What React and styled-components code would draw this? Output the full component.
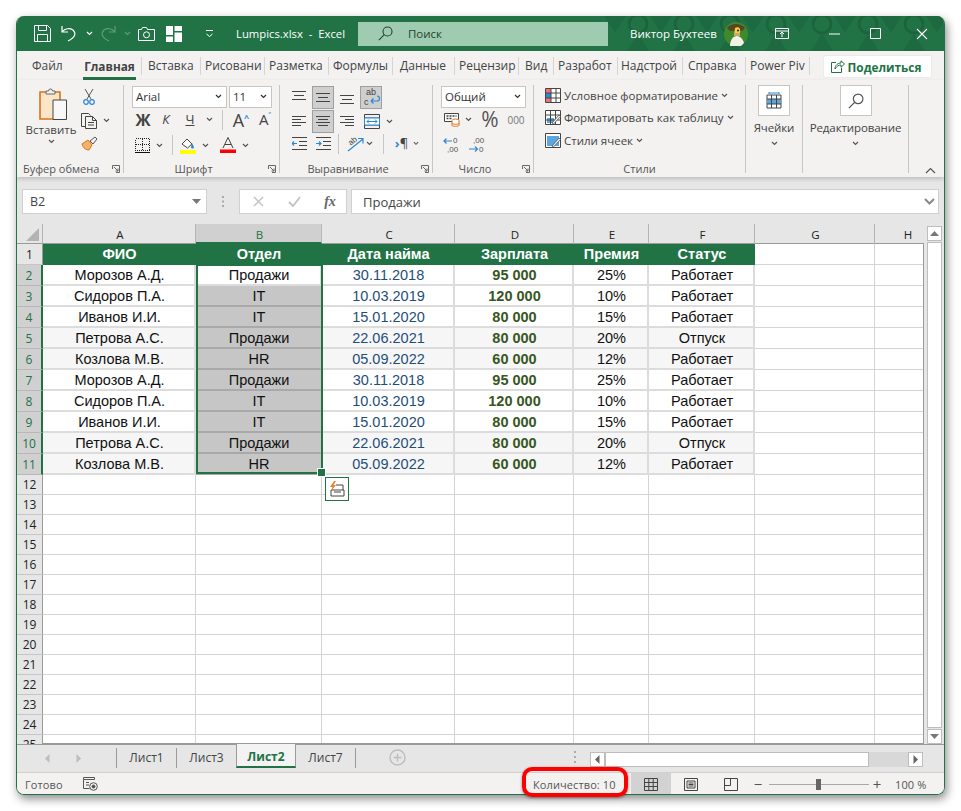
import React from 'react';
import styled, { createGlobalStyle } from 'styled-components';

const GREEN = '#217346';
const UI_FONT = '"Open Sans", "Noto Sans", sans-serif';

const GlobalStyle = createGlobalStyle`
  html, body { margin: 0; padding: 0; background: #fff; }
  * { box-sizing: border-box; }
  body { font-family: ${UI_FONT}; color: #333; }
`;

const Page = styled.div`
  width: 961px;
  height: 811px;
  padding: 16px;
`;

const WindowFrame = styled.div`
  position: relative;
  border-radius: 8px;
  box-shadow: 2px 4px 10px rgba(0, 0, 0, 0.45);
`;

const Excel = styled.div`
  width: 929px;
  height: 779px;
  display: flex;
  flex-direction: column;
  border: 1px solid ${GREEN};
  border-top: 0;
  border-radius: 8px;
  overflow: hidden;
  background: #e6e6e6;
`;

/* title bar */
const TitleBar = styled.div`
  position: relative;
  flex: 0 0 35px;
  display: flex;
  align-items: center;
  background: ${GREEN};
  color: #fff;
  font-size: 11.5px;
`;

const TitlePattern = styled.svg`
  position: absolute;
  right: 0;
  top: 0;
  pointer-events: none;
`;

const Slot = styled.div`
  flex: 0 0 ${(p) => p.$w}px;
  width: ${(p) => p.$w}px;
  display: flex;
  align-items: center;
  justify-content: center;
  position: relative;
`;

const FileName = styled.div`
  flex: 0 0 122px;
  white-space: nowrap;
  font-size: 11.3px;
`;

const SearchBox = styled.div`
  flex: 0 0 250px;
  height: 24px;
  display: flex;
  align-items: center;
  background: #9fcbb0;
  color: #22452f;
  font-size: 11.5px;
  padding-left: 20px;
  gap: 15px;
  position: relative;
`;

const UserName = styled.div`
  flex: 0 0 94px;
  margin-left: 22px;
  font-size: 11.5px;
  white-space: nowrap;
  position: relative;
`;

/* ribbon tabs */
const TabRow = styled.div`
  flex: 0 0 29px;
  display: flex;
  align-items: flex-start;
  background: #f3f2f1;
  position: relative;
`;

const RibbonTab = styled.div`
  flex: 0 0 ${(p) => p.$w}px;
  height: 18px;
  margin-top: 6px;
  padding-left: ${(p) => p.$pad ?? 4}px;
  font-size: 12px;
  line-height: 18px;
  color: #444;
  white-space: nowrap;
  overflow: hidden;
  border-right: ${(p) => (p.$plain ? '0' : '1px solid #d6d4d2')};
`;

const ActiveTab = styled.div`
  flex: 0 0 53px;
  margin-right: 5px;
  height: 23px;
  margin-top: 6px;
  font-size: 11.8px;
  line-height: 18px;
  font-weight: 700;
  color: #444;
  text-align: center;
  white-space: nowrap;
  border-bottom: 3px solid ${GREEN};
`;

const TabEdge = styled.div`
  flex: 0 0 1px;
  height: 18px;
  margin-top: 6px;
  background: #d6d4d2;
`;

const ShareButton = styled.div`
  margin-left: 13px;
  margin-top: 4px;
  width: 109px;
  height: 23px;
  display: flex;
  align-items: center;
  justify-content: center;
  gap: 3px;
  padding-right: 3px;
  background: #fff;
  border: 1px solid #eceaea;
  border-radius: 2px;
  color: ${GREEN};
  font-size: 11.8px;
  font-weight: 700;
`;

/* ribbon */
const Ribbon = styled.div`
  flex: 0 0 97px;
  display: flex;
  align-items: flex-start;
  padding-top: 5px;
  background: #f3f2f1;
  position: relative;
  box-shadow: 0 2px 4px rgba(0, 0, 0, 0.18);
  z-index: 2;
`;

const Group = styled.div`
  position: relative;
  flex: 0 0 ${(p) => p.$w}px;
  height: 88px;
  display: flex;
  flex-direction: column;
  border-right: 1px solid #c8c6c4;
`;

const GroupBody = styled.div`
  flex: 0 0 76px;
  display: flex;
  flex-direction: ${(p) => (p.$row ? 'row' : 'column')};
  padding-left: ${(p) => p.$pad ?? 0}px;
`;

const GroupLabel = styled.div`
  height: 12px;
  line-height: 16px;
  font-size: 11px;
  color: #555;
  white-space: nowrap;
  text-align: ${(p) => (p.$left ? 'left' : 'center')};
  padding-left: ${(p) => (p.$left ? 6 : 0)}px;
  padding-right: ${(p) => (p.$left ? 0 : p.$pr ?? 16)}px;
`;

const Launcher = styled.svg`
  position: absolute;
  right: 3px;
  bottom: 0;
`;

const ToolRow = styled.div`
  display: flex;
  align-items: center;
  height: ${(p) => p.$h ?? 24}px;
  padding-left: ${(p) => p.$pad ?? 0}px;
`;

const ActiveBox = styled.div`
  flex: 0 0 22px;
  height: 23px;
  margin-right: 2px;
  display: flex;
  align-items: center;
  justify-content: center;
  background: ${(p) => (p.$on ? '#cfcfcf' : 'transparent')};
  border: 1px solid ${(p) => (p.$on ? '#9f9f9f' : 'transparent')};
`;

const Divider = styled.div`
  width: 1px;
  height: 20px;
  background: #c8c6c4;
`;

const Select = styled.div`
  width: ${(p) => p.$w}px;
  height: 22px;
  margin-right: ${(p) => p.$mr ?? 0}px;
  display: flex;
  align-items: center;
  justify-content: space-between;
  padding: 0 4px 0 3px;
  background: #fff;
  border: 1px solid #c8c6c4;
  font-size: 11.5px;
  color: #333;
`;

const PasteColumn = styled.div`
  flex: 0 0 62px;
  display: flex;
  flex-direction: column;
  align-items: center;
  padding-top: 3px;
  padding-left: 6px;
  font-size: 11.5px;
  color: #444;
  white-space: nowrap;
`;

const PasteArt = styled.div`
  margin-left: 4px;
  height: 32px;
`;

const PasteLabel = styled.div`
  margin-top: 1px;
  line-height: 18px;
`;

const ClipColumn = styled.div`
  display: flex;
  flex-direction: column;
`;

const StyleList = styled.div`
  margin-top: -1px;
`;

const StyleRow = styled.div`
  display: flex;
  align-items: center;
  height: 22.5px;
  padding-left: 11px;
  gap: 3px;
  font-size: 11.5px;
  color: #444;
  white-space: nowrap;
`;

const BigTool = styled.div`
  flex: 1;
  display: flex;
  flex-direction: column;
  align-items: center;
  font-size: 11.5px;
  color: #444;
  white-space: nowrap;
`;

const BigButton = styled.div`
  width: 32px;
  height: 31px;
  display: flex;
  align-items: center;
  justify-content: center;
  background: #fff;
  border: 1px solid #c8c6c4;
  margin-bottom: 3px;
`;

const BigLabel = styled.div`
  line-height: 18px;
  margin-bottom: 4px;
  letter-spacing: -0.1px;
`;

const CollapseIcon = styled.svg`
  position: absolute;
  right: 8px;
  bottom: 3px;
`;

const Glyph = styled.span`
  font-size: ${(p) => p.$size}px;
  font-weight: ${(p) => (p.$bold ? 700 : 400)};
  font-style: ${(p) => (p.$italic ? 'italic' : 'normal')};
  text-decoration: ${(p) => (p.$under ? 'underline' : 'none')};
  color: ${(p) => p.$color || '#444'};
  line-height: 1;
`;

const Caret = styled.sup`
  font-size: 9px;
  font-weight: 700;
  color: #2b88d8;
  vertical-align: 6px;
  line-height: 0;
`;

const PilcrowArrow = styled.span`
  color: #2b88d8;
  font-weight: 700;
`;

const FxGlyph = styled.span`
  font-family: "Liberation Serif", serif;
  font-size: 14px;
  font-style: italic;
  font-weight: 700;
  color: #666;
`;

/* formula bar */
const FormulaBar = styled.div`
  flex: 0 0 47px;
  display: flex;
  align-items: flex-start;
  padding: 12px 5px 0 5px;
  background: #e6e6e6;
`;

const NameBox = styled.div`
  width: 185px;
  height: 25px;
  display: flex;
  align-items: center;
  justify-content: space-between;
  padding: 0 5px 0 7px;
  background: #fff;
  border: 1px solid #d0d0d0;
  font-size: 12.5px;
  color: #444;
`;

const GripDots = styled.div`
  width: 32px;
  height: 25px;
  display: flex;
  align-items: center;
  justify-content: center;
`;

const FormulaButtons = styled.div`
  width: 108px;
  height: 25px;
  margin-right: 4px;
  display: flex;
  align-items: center;
  background: #fff;
  border: 1px solid #d0d0d0;
`;

const FormulaCell = styled.div`
  flex: 1;
  height: 25px;
  display: flex;
  align-items: center;
  justify-content: space-between;
  padding: 0 3px 0 11px;
  background: #fff;
  border: 1px solid #d0d0d0;
  font-size: 13px;
  color: #444;
`;

/* sheet */
const SheetArea = styled.div`
  flex: 0 0 520px;
  display: flex;
  background: #e6e6e6;
`;

const Sheet = styled.div`
  position: relative;
  flex: 0 0 907px;
  height: 520px;
  overflow: hidden;
  font-family: "Liberation Sans", Arial, sans-serif;
`;

/* the last column runs on past the visible edge of the sheet */
const COLUMNS = '26px 153px 126px 133px 119px 75px 106px 120px 65px';

const SheetRow = styled.div`
  display: grid;
  grid-template-columns: ${COLUMNS};
  height: ${(p) => p.$h}px;
`;

const ColHead = styled.div`
  display: flex;
  align-items: center;
  justify-content: center;
  padding: 2px 0 0 2px;
  background: ${(p) => (p.$on ? '#d0d0d0' : '#e6e6e6')};
  border-right: 1px solid ${(p) => (p.$on ? '#b8b8b8' : '#b4b4b4')};
  border-bottom: ${(p) => (p.$on ? `2px solid ${GREEN}` : '1px solid #9a9a9a')};
  font-family: ${UI_FONT};
  font-size: 11.5px;
  color: ${(p) => (p.$on ? GREEN : '#222')};
`;

const Corner = styled.div`
  display: flex;
  align-items: flex-end;
  justify-content: flex-end;
  padding: 0 3px 2px 0;
  background: #e6e6e6;
  border-right: 1px solid #b4b4b4;
  border-bottom: 1px solid #9a9a9a;
`;

const RowHead = styled.div`
  display: flex;
  align-items: center;
  justify-content: center;
  background: ${(p) => (p.$on ? '#d0d0d0' : '#e6e6e6')};
  border-bottom: 1px solid ${(p) => (p.$on ? '#b8b8b8' : '#c6c6c6')};
  border-right: ${(p) => (p.$on ? `2px solid ${GREEN}` : '1px solid #9a9a9a')};
  font-family: ${UI_FONT};
  font-size: 12px;
  color: ${(p) => (p.$on ? GREEN : '#222')};
`;

const HeaderCell = styled.div`
  display: flex;
  align-items: center;
  justify-content: center;
  padding-bottom: 1px;
  background: ${GREEN};
  color: #fff;
  font-size: 14.5px;
  font-weight: 700;
`;

const DataCell = styled.div`
  display: flex;
  align-items: center;
  justify-content: center;
  padding: 1px 0 0 2px;
  background: ${(p) => (p.$shade ? '#f6f6f6' : '#fff')};
  border-right: 2px solid #dcdcdc;
  border-bottom: 2px solid #dcdcdc;
  font-size: 14.5px;
  color: ${(p) => p.$color || '#111'};
  font-weight: ${(p) => (p.$bold ? 700 : 400)};
`;

const SelectedCell = styled(DataCell)`
  background: #c6c6c6;
  border-right: 2px solid #c6c6c6;
  border-bottom: 2px solid #a9a9a9;
`;

const EmptyCell = styled.div`
  background: #fff;
  border-right: 1px solid #d4d4d4;
  border-bottom: 1px solid #d4d4d4;
`;

const GridEdge = styled.div`
  position: absolute;
  right: 0;
  top: 19px;
  bottom: 0;
  width: 1px;
  background: #9a9a9a;
`;

const GridBottomEdge = styled.div`
  position: absolute;
  left: 26px;
  right: 0;
  bottom: 0;
  height: 1px;
  background: #9a9a9a;
`;

const Selection = styled.div`
  position: absolute;
  left: 179px;
  top: 40px;
  width: 127px;
  height: 210px;
  border: 2px solid ${GREEN};
  pointer-events: none;
`;

const FillHandle = styled.div`
  position: absolute;
  right: -5px;
  bottom: -5px;
  width: 7px;
  height: 7px;
  background: ${GREEN};
  border: 1px solid #fff;
  box-sizing: content-box;
`;

const PasteOptions = styled.div`
  position: absolute;
  left: 308px;
  top: 253px;
  width: 24px;
  height: 24px;
  display: flex;
  align-items: center;
  justify-content: center;
  background: #fff;
  border: 1px solid ${GREEN};
`;

const VScroll = styled.div`
  flex: 0 0 20px;
  height: 520px;
  padding: 2px 2px 0 3px;
  display: flex;
  flex-direction: column;
  gap: 1px;
`;

const ScrollButton = styled.div`
  flex: 0 0 ${(p) => p.$size ?? 15}px;
  width: ${(p) => p.$w ?? 15}px;
  display: flex;
  align-items: center;
  justify-content: center;
  background: #fff;
  border: 1px solid #bdbdbd;
`;

const VThumb = styled.div`
  flex: 1;
  background: #fff;
  border: 1px solid #bdbdbd;
`;

/* sheet tabs */
const SheetTabs = styled.div`
  flex: 0 0 28px;
  display: flex;
  align-items: flex-start;
  background: #e6e6e6;
  border-top: 1px solid #9a9a9a;
  font-size: 12px;
  color: #444;
`;

const NavArrows = styled.div`
  flex: 0 0 100px;
  height: 20px;
  margin-top: 3px;
  display: flex;
  align-items: center;
  gap: 22px;
  padding-left: 26px;
  border-right: 1px solid #9a9a9a;
`;

const SheetTab = styled.div`
  flex: 0 0 60px;
  height: 20px;
  margin-top: 3px;
  line-height: 20px;
  text-align: center;
  border-right: 1px solid #9a9a9a;
`;

const ActiveSheetTab = styled.div`
  flex: 0 0 60px;
  height: 24px;
  margin-top: -1px;
  margin-left: -1px;
  line-height: 26px;
  text-align: center;
  font-weight: 700;
  color: ${GREEN};
  background: #f3f3f3;
  border-left: 1px solid #9a9a9a;
  border-right: 1px solid #9a9a9a;
  border-bottom: 2px solid ${GREEN};
`;

const AddSheet = styled.div`
  margin-left: 33px;
  margin-top: 4px;
  width: 18px;
  height: 18px;
`;

const SplitDots = styled.div`
  margin-left: 167px;
  margin-top: 5px;
  width: 16px;
`;

const HScroll = styled.div`
  width: 333px;
  height: 15px;
  margin-top: 7px;
  display: flex;
  align-items: stretch;
`;

const HThumb = styled.div`
  flex: 0 0 264px;
  background: #fff;
  border: 1px solid #bdbdbd;
`;

const HTrack = styled.div`
  flex: 1;
  background: #d8d8d8;
`;

/* status bar */
const StatusBar = styled.div`
  flex: 1;
  display: flex;
  align-items: center;
  background: #f3f2f1;
  border-top: 1px solid #d2d0ce;
  font-size: 11px;
  color: #555;
  letter-spacing: 0.1px;
`;

const StatusLeft = styled.div`
  flex: 0 0 66px;
  padding-left: 8px;
`;

const StatusCount = styled.div`
  margin-left: 435px;
  flex: 0 0 98px;
  white-space: nowrap;
`;

const ViewButton = styled.div`
  flex: 0 0 40px;
  height: 22px;
  display: flex;
  align-items: center;
  justify-content: center;
  background: ${(p) => (p.$on ? '#d2d2d2' : 'transparent')};
`;

const ZoomSlider = styled.div`
  position: relative;
  width: 100px;
  height: 1px;
  margin: 0 2px 0 4px;
  background: #a8a8a8;
`;

const ZoomThumb = styled.div`
  position: absolute;
  left: 47px;
  top: -5px;
  width: 5px;
  height: 11px;
  background: #666;
`;

const ZoomText = styled.div`
  margin-left: 12px;
  white-space: nowrap;
`;

const ZoomSign = styled.span`
  font-size: 15px;
  color: #555;
  line-height: 1;
  width: ${(p) => p.$w}px;
  text-align: center;
`;

const Highlight = styled.div`
  position: absolute;
  left: 506px;
  top: 751px;
  width: 106px;
  height: 30px;
  border: 4px solid #f00;
  border-radius: 10px;
  box-shadow: 0 1px 3px rgba(0, 0, 0, 0.45);
  pointer-events: none;
  z-index: 5;
`;

/* icons */
const Chevron = ({ color = '#555', size = 7 }) => (
  <svg width={size} height={size - 2} viewBox="0 0 7 5">
    <path d="M1 1l2.500 2.500L6 1" fill="none" stroke={color} strokeWidth="1.200" />
  </svg>
);

const Tri = ({ dir = 'down', color = '#777', size = 9 }) => {
  const d = {
    down: 'M0 2h9L4.500 7z',
    up: 'M0 7h9L4.500 2z',
    left: 'M6.500 0v9L2 4.500z',
    right: 'M2.500 0v9L7 4.500z',
  }[dir];
  return (
    <svg width={size} height={size} viewBox="0 0 9 9">
      <path d={d} fill={color} />
    </svg>
  );
};

const LauncherIcon = () => (
  <Launcher width="8" height="8" viewBox="0 0 8 8">
    <path d="M.5 4V.5H7.500V7.500H4M2 2l4 4M6 3.500V6H3.500" fill="none" stroke="#666" />
  </Launcher>
);

const Lines = ({ rows }) => (
  <svg width="15" height="15" viewBox="0 0 15 15">
    {rows.map(([x1, x2, y]) => (
      <path key={y} d={`M${x1} ${y}.5H${x2}`} stroke="#444" />
    ))}
  </svg>
);

const SaveIcon = () => (
  <svg width="17" height="17" viewBox="0 0 17 17" fill="none" stroke="#fff">
    <path d="M.5.500h13l3 3v13H.5zM4.500.500v5h8v-5M3.500 16.500v-7h10v7" />
  </svg>
);

const UndoIcon = ({ color = '#fff' }) => (
  <svg width="16" height="17" viewBox="0 0 16 17" fill="none" stroke={color} strokeWidth="1.200">
    <path d="M1 1v6h6M1 7c3-4 8-4 11-2 3 3 3 7-5 11" />
  </svg>
);

const RedoIcon = () => (
  <svg width="16" height="17" viewBox="0 0 16 17" fill="none" stroke="#5f9c79" strokeWidth="1.200">
    <path d="M15 1v6H9M15 7c-3-4-8-4-11-2-3 3-3 7 5 11" />
  </svg>
);

const CameraIcon = () => (
  <svg width="17" height="14" viewBox="0 0 17 14" fill="none" stroke="#fff">
    <path d="M.5 2.500h3l1-2h4l1 2h7v11H.5z" />
    <circle cx="8.500" cy="7.800" r="3" />
  </svg>
);

const QuadIcon = () => (
  <svg width="16" height="16" viewBox="0 0 16 16" fill="#fff">
    <path d="M0 0h7v9H0zM8.500 0H16v5H8.500zM8.500 6.500H16V16H8.500zM0 10.500h7V16H0z" />
  </svg>
);

const CustomizeIcon = () => (
  <svg width="9" height="9" viewBox="0 0 9 9" fill="none" stroke="#fff">
    <path d="M1 1.500h7M1.500 5l3 2.500L7.500 5" />
  </svg>
);

const SearchIcon = ({ color, size = 15 }) => (
  <svg width={size} height={size} viewBox="0 0 15 15" fill="none" stroke={color} strokeWidth="1.100">
    <circle cx="9.500" cy="5.500" r="4.500" />
    <path d="M6.300 8.700L.8 14.200" />
  </svg>
);

const Avatar = () => (
  <svg width="24" height="24" viewBox="0 0 24 24">
    <circle cx="12" cy="12" r="12" fill="#3f8a2d" />
    <path d="M3 6a12 12 0 0 1 18 0l-3 3H6z" fill="#5c4326" />
    <path d="M11 6c3-2 6 0 5 4l-1 4h-5z" fill="#f3cf3c" />
    <path d="M10 11h6v3h-6z" fill="#c9a86a" />
    <path d="M6 24c0-6 3-10 7-10s6 4 7 7l-3 3z" fill="#f4f1e6" />
    <circle cx="14" cy="8.500" r="1" fill="#222" />
  </svg>
);

const RibbonDisplayIcon = () => (
  <svg width="14" height="11" viewBox="0 0 14 11" fill="none" stroke="#fff">
    <path d="M.5.500h13v10H.5zM.5 3h13M7 9V4M5 6l2-2 2 2" />
  </svg>
);

const MinIcon = () => (
  <svg width="11" height="2" viewBox="0 0 11 2"><path d="M0 1h11" stroke="#fff" /></svg>
);

const MaxIcon = () => (
  <svg width="11" height="11" viewBox="0 0 11 11"><path d="M.5.500h10v10H.5z" fill="none" stroke="#fff" /></svg>
);

const CloseIcon = () => (
  <svg width="12" height="12" viewBox="0 0 12 12"><path d="M1 1l10 10M11 1L1 11" stroke="#fff" strokeWidth="1.100" /></svg>
);

const ShareIcon = () => (
  <svg width="14" height="13" viewBox="0 0 14 13" fill="none" stroke="#217346">
    <path d="M5 2.500H.5v10h10V8" />
    <path d="M4 9c0-4 3-6 6-6V.8L13.500 4 10 7.300V5C7.500 5 5.500 6.500 4 9z" />
  </svg>
);

const PasteIcon = () => (
  <svg width="28" height="32" viewBox="0 0 28 32">
    <path d="M1 4h20v27H1z" fill="#fbe5c8" stroke="#d9731a" strokeWidth="1.600" />
    <path d="M7 5V3h2.500a2 2 0 0 1 4 0H16v3H7z" fill="#f3f2f1" stroke="#666" />
    <path d="M14 12h13.500v19.500H14z" fill="#f8f8f8" stroke="#444" />
  </svg>
);

const ScissorsIcon = () => (
  <svg width="12" height="16" viewBox="0 0 12 16" fill="none">
    <path d="M2 0l6 10M10 0L4 10" stroke="#555" />
    <circle cx="3" cy="13" r="2.300" stroke="#2b88d8" strokeWidth="1.200" />
    <circle cx="9" cy="13" r="2.300" stroke="#2b88d8" strokeWidth="1.200" />
  </svg>
);

const CopyIcon = () => (
  <svg width="16" height="16" viewBox="0 0 16 16" fill="none" stroke="#444">
    <path d="M4 13.500H.5V.5h7l2 2" />
    <path d="M4.500 3.500h7l4 4v8h-11zM11.500 3.500v4h4M7 9.500h6M7 12h6" />
  </svg>
);

const BrushIcon = () => (
  <svg width="17" height="15" viewBox="0 0 17 15">
    <path d="M1 8l6-4 4 5-3 5c-3 0-6-2-7-6z" fill="#f6b26b" stroke="#d9731a" />
    <path d="M9 5l5-4 2 2-4 5z" fill="#f3f2f1" stroke="#555" />
  </svg>
);

const BordersIcon = () => (
  <svg width="15" height="15" viewBox="0 0 15 15" fill="none" shapeRendering="crispEdges">
    <path d="M.5.500h14v12H.5zM7.500.500v12M.5 6.500h14" stroke="#222" strokeDasharray="1 1" />
    <path d="M0 14.500h15" stroke="#111" />
  </svg>
);

const FillIcon = () => (
  <svg width="16" height="17" viewBox="0 0 16 17">
    <path d="M2 7l5-5 5 5-4.500 4z" fill="#fff" stroke="#444" />
    <path d="M12 6l2 4a1.500 1.500 0 0 1-3 0z" fill="#2b88d8" />
    <path d="M0 13h16v4H0z" fill="#ffff00" />
  </svg>
);

const FontColorIcon = () => (
  <svg width="16" height="16" viewBox="0 0 16 16">
    <path d="M3 11L8 .5 13 11M5 7.500h6" fill="none" stroke="#444" />
    <path d="M0 12.500h16V16H0z" fill="#f00" />
  </svg>
);

const WrapIcon = () => (
  <svg width="20" height="21" viewBox="0 0 20 21" fill="none">
    <text x="5" y="8" fontSize="9" fill="#444" fontFamily="Liberation Sans">ab</text>
    <text x="3" y="18" fontSize="9" fill="#444" fontFamily="Liberation Sans">c</text>
    <path d="M10 14h6a2.500 2.500 0 0 0 0-5M10 14l2.500-2.500M10 14l2.500 2.500" stroke="#2b88d8" strokeWidth="1.200" />
  </svg>
);

const MergeIcon = () => (
  <svg width="16" height="15" viewBox="0 0 16 15" fill="none">
    <path d="M.5.500h15v14H.5zM.5 4h15M.5 11h15" stroke="#444" />
    <path d="M.5 4h15v7H.5z" fill="#fff" stroke="#2b88d8" />
    <path d="M3 7.500h10M5 5.500l-2 2 2 2M11 5.500l2 2-2 2" stroke="#2b88d8" />
  </svg>
);

const IndentIcon = ({ flip }) => (
  <svg width="15" height="13" viewBox="0 0 15 13" fill="none">
    <path d="M0 .5h15M7 4.500h8M7 8.500h8M0 12.500h15" stroke="#444" />
    {flip ? (
      <path d="M0 6.500h5M3 4.500l2 2-2 2" stroke="#2b88d8" strokeWidth="1.200" />
    ) : (
      <path d="M5 6.500H0M2 4.500l-2 2 2 2" stroke="#2b88d8" strokeWidth="1.200" />
    )}
  </svg>
);

const AngleIcon = () => (
  <svg width="17" height="17" viewBox="0 0 17 17" fill="none" overflow="visible">
    <path d="M1 16L16 4M11 3.500h5v5" stroke="#2b88d8" strokeWidth="1.200" />
    <text x="1" y="9" fontSize="8" fill="#444" fontFamily="Liberation Sans" transform="rotate(-40 5 6)">ab</text>
  </svg>
);

const AccountIcon = () => (
  <svg width="16" height="14" viewBox="0 0 16 14">
    <path d="M.5.500h14v8H.5z" fill="#fff" stroke="#444" />
    <path d="M2.500 3h10M2.500 5.500h5" stroke="#444" strokeWidth="1.500" strokeDasharray="2 1" />
    <ellipse cx="11.500" cy="7.500" rx="3.500" ry="1.500" fill="#fff" stroke="#d9731a" />
    <path d="M8 8v4.500c0 1 7 1 7 0V8" fill="#fff" stroke="#d9731a" />
    <path d="M8 10.500c0 1 7 1 7 0" fill="none" stroke="#d9731a" />
  </svg>
);

const DecimalIcon = ({ more }) => (
  <svg width="16" height="17" viewBox="0 0 16 17" fill="none">
    <path
      d={more ? 'M1 5h8M3.500 2.500L1 5l2.500 2.500' : 'M0 13h8M6 10.500L8.500 13 6 15.500'}
      stroke="#2b88d8"
      strokeWidth="1.200"
    />
    <text x={more ? 10 : 4} y="7" fontSize="8" fill="#555" fontFamily="Liberation Sans">{more ? '0' : ',00'}</text>
    <text x={more ? 4 : 10} y="16" fontSize="8" fill="#555" fontFamily="Liberation Sans">{more ? ',00' : '0'}</text>
  </svg>
);

const CondFormatIcon = () => (
  <svg width="16" height="15" viewBox="0 0 16 15">
    <path d="M.5.500h15v14H.5z" fill="#fff" stroke="#444" />
    <path d="M1 1h5v4H1zM1 10h5v4H1z" fill="#f1707b" />
    <path d="M1 5h5v5H1z" fill="#2b88d8" />
    <path d="M6 .5v14M11 .5v14M.5 5h15M.5 10h15" stroke="#444" fill="none" />
  </svg>
);

const TableStyleIcon = ({ filled }) => (
  <svg width="16" height="15" viewBox="0 0 16 15">
    <path d="M.5.500h15v14H.5z" fill="#fff" stroke="#444" />
    <path d={filled ? 'M2 3h12v10H2z' : 'M2 8h7v5H2z'} fill="#5ba5e0" />
    {!filled && <path d="M5.500.5v14M10.500.5v14M.5 5h15M.5 10h15" stroke="#444" fill="none" />}
    <path d="M7 13l7-8 1.500 1.500L8.500 14z" fill="#eee" stroke="#555" strokeWidth=".8" />
  </svg>
);

const CellsIcon = () => (
  <svg width="16" height="17" viewBox="0 0 16 17">
    <path d="M1 3h14v13H1z" fill="#fff" stroke="#444" />
    <path d="M1 7h14v5H1z" fill="#5ba5e0" />
    <path d="M1 7h14M1 12h14M5.500 3v13M10.500 3v13" stroke="#444" fill="none" />
    <path d="M3 1h10M3 0v2M13 0v2" stroke="#2b88d8" fill="none" />
  </svg>
);

const CameraViewIcon = () => (
  <svg width="15" height="14" viewBox="0 0 15 14" fill="none" stroke="#555">
    <path d="M.5.500h11v2H.5zM.5 2.500v9h6M3 5.500h3M3 8h3" />
    <circle cx="10.500" cy="9.500" r="3.800" />
    <circle cx="10.500" cy="9.500" r="1.500" fill="#555" />
  </svg>
);

const GridViewIcon = () => (
  <svg width="14" height="13" viewBox="0 0 14 13" fill="none" stroke="#444">
    <path d="M.5.500h13v12H.5zM4.800.500v12M9.200.500v12M.5 4.500h13M.5 8.500h13" />
  </svg>
);

const PageViewIcon = () => (
  <svg width="14" height="13" viewBox="0 0 14 13" fill="none" stroke="#444">
    <path d="M.5.500h13v12H.5zM3 3h8v7H3zM4.500 5h5M4.500 6.500h5M4.500 8h5" />
  </svg>
);

const BreakViewIcon = () => (
  <svg width="14" height="13" viewBox="0 0 14 13" fill="none" stroke="#444">
    <path d="M.5.500h13v12H.5zM.5 7.500h6v-7" />
  </svg>
);

const PasteOptionsIcon = () => (
  <svg width="16" height="16" viewBox="0 0 16 16">
    <path d="M7 4h7v5M4 9h11v6H2V9z" fill="none" stroke="#444" />
    <path d="M5 11h7" stroke="#444" />
    <path d="M5 0L1 6h2.500L2 10l5-6H4.500L7 0z" fill="#e8822d" />
  </svg>
);

const HexPattern = () => (
  <TitlePattern width="340" height="35" viewBox="0 0 340 35">
    <defs>
      <pattern id="hexes" width="46" height="35" patternUnits="userSpaceOnUse">
        <path d="M0 0l11 17L22 0zM23 35l11-18 11 18z" fill="#1e6a40" />
        <circle cx="34" cy="8" r="9" fill="none" stroke="#1c653c" strokeWidth="3" />
      </pattern>
    </defs>
    <rect width="340" height="35" fill="url(#hexes)" />
  </TitlePattern>
);

/* data */
const people = [
  ['Морозов А.Д.', 'Продажи', '30.11.2018', '95 000', '25%', 'Работает'],
  ['Сидоров П.А.', 'IT', '10.03.2019', '120 000', '10%', 'Работает'],
  ['Иванов И.И.', 'IT', '15.01.2020', '80 000', '15%', 'Работает'],
  ['Петрова А.С.', 'Продажи', '22.06.2021', '80 000', '20%', 'Отпуск'],
  ['Козлова М.В.', 'HR', '05.09.2022', '60 000', '12%', 'Работает'],
];
const rows = [...people, ...people];
const headers = ['ФИО', 'Отдел', 'Дата найма', 'Зарплата', 'Премия', 'Статус'];
const letters = ['A', 'B', 'C', 'D', 'E', 'F', 'G', 'H'];
const emptyRows = Array.from({ length: 14 }, (_, i) => i + 12);

const tabs = [
  ['Вставка', 59, 6], ['Рисовани', 64, 4], ['Разметка', 64, 4], ['Формулы', 64, 4], ['Данные', 62, 7],
  ['Рецензир', 64, 4], ['Вид', 35, 6], ['Разработ', 64, 4], ['Надстрой', 65, 3], ['Справка', 63, 5], ['Power Piv', 64, 4],
];

const DataRow = ({ row, index }) => {
  const shade = index === 3 || index === 4 || index === 8 || index === 9;
  const Dept = index === 0 ? DataCell : SelectedCell;
  return (
    <SheetRow $h={21}>
      <RowHead $on>{index + 2}</RowHead>
      <DataCell $shade={shade}>{row[0]}</DataCell>
      <Dept>{row[1]}</Dept>
      <DataCell $shade={shade} $color="#1f4e79">{row[2]}</DataCell>
      <DataCell $shade={shade} $color="#375623" $bold>{row[3]}</DataCell>
      <DataCell $shade={shade}>{row[4]}</DataCell>
      <DataCell $shade={shade}>{row[5]}</DataCell>
      <EmptyCell />
      <EmptyCell />
    </SheetRow>
  );
};

export default function App() {
  return (
    <Page>
      <GlobalStyle />
      <WindowFrame>
        <Excel>
          <TitleBar>
            <HexPattern />
            <Slot $w={13} />
            <Slot $w={25}><SaveIcon /></Slot>
            <Slot $w={28}><UndoIcon /></Slot>
            <Slot $w={12}><Chevron color="#fff" /></Slot>
            <Slot $w={26}><RedoIcon /></Slot>
            <Slot $w={12}><Chevron color="#5f9c79" /></Slot>
            <Slot $w={26}><CameraIcon /></Slot>
            <Slot $w={29}><QuadIcon /></Slot>
            <Slot $w={42}><CustomizeIcon /></Slot>
            <Slot $w={6} />
            <FileName>Lumpics.xlsx&nbsp; -&nbsp; Excel</FileName>
            <SearchBox>
              <SearchIcon color="#22452f" />
              <span>Поиск</span>
            </SearchBox>
            <UserName>Виктор Бухтеев</UserName>
            <Slot $w={24}><Avatar /></Slot>
            <Slot $w={27} />
            <Slot $w={14}><RibbonDisplayIcon /></Slot>
            <Slot $w={40} />
            <Slot $w={11}><MinIcon /></Slot>
            <Slot $w={30} />
            <Slot $w={11}><MaxIcon /></Slot>
            <Slot $w={35} />
            <Slot $w={12}><CloseIcon /></Slot>
          </TitleBar>

          <TabRow>
            <RibbonTab $w={66} $pad={15} $plain>Файл</RibbonTab>
            <ActiveTab>Главная</ActiveTab>
            <TabEdge />
            {tabs.map(([name, w, pad]) => (
              <RibbonTab key={name} $w={w} $pad={pad}>{name}</RibbonTab>
            ))}
            <ShareButton><ShareIcon />Поделиться</ShareButton>
          </TabRow>

          <Ribbon>
            <Group $w={107}>
              <GroupBody $row>
                <PasteColumn>
                  <PasteArt><PasteIcon /></PasteArt>
                  <PasteLabel>Вставить</PasteLabel>
                  <Chevron />
                </PasteColumn>
                <ClipColumn>
                  <ToolRow $h={24}><Slot $w={20}><ScissorsIcon /></Slot></ToolRow>
                  <ToolRow $h={23}><Slot $w={20}><CopyIcon /></Slot><Slot $w={14}><Chevron /></Slot></ToolRow>
                  <ToolRow $h={23}><Slot $w={20}><BrushIcon /></Slot></ToolRow>
                </ClipColumn>
              </GroupBody>
              <GroupLabel $left>Буфер обмена</GroupLabel>
              <LauncherIcon />
            </Group>

            <Group $w={156}>
              <GroupBody $pad={8}>
                <ToolRow $h={23}>
                  <Select $w={95} $mr={2}><span>Arial</span><Chevron color="#333" /></Select>
                  <Select $w={43}><span>11</span><Chevron color="#333" /></Select>
                </ToolRow>
                <ToolRow $h={23}>
                  <Slot $w={22}><Glyph $size={16} $bold>Ж</Glyph></Slot>
                  <Slot $w={24}><Glyph $size={13} $italic>К</Glyph></Slot>
                  <Slot $w={24}><Glyph $size={13} $under>Ч</Glyph></Slot>
                  <Slot $w={14}><Chevron /></Slot>
                  <Slot $w={12}><Divider /></Slot>
                  <Slot $w={26}><Glyph $size={18}>A<Caret>^</Caret></Glyph></Slot>
                  <Slot $w={22}><Glyph $size={15}>A<Caret>˅</Caret></Glyph></Slot>
                </ToolRow>
                <ToolRow $h={28}>
                  <Slot $w={20}><BordersIcon /></Slot>
                  <Slot $w={14}><Chevron /></Slot>
                  <Slot $w={12}><Divider /></Slot>
                  <Slot $w={20}><FillIcon /></Slot>
                  <Slot $w={14}><Chevron /></Slot>
                  <Slot $w={6} />
                  <Slot $w={20}><FontColorIcon /></Slot>
                  <Slot $w={14}><Chevron /></Slot>
                </ToolRow>
              </GroupBody>
              <GroupLabel>Шрифт</GroupLabel>
              <LauncherIcon />
            </Group>

            <Group $w={153}>
              <GroupBody $pad={8}>
                <ToolRow $h={24}>
                  <ActiveBox><Lines rows={[[0, 14, 1], [2, 12, 5], [0, 14, 9]]} /></ActiveBox>
                  <ActiveBox $on><Lines rows={[[0, 14, 3], [2, 12, 7], [0, 14, 11]]} /></ActiveBox>
                  <ActiveBox><Lines rows={[[0, 14, 5], [2, 12, 9], [0, 14, 13]]} /></ActiveBox>
                  <ActiveBox $on><WrapIcon /></ActiveBox>
                </ToolRow>
                <ToolRow $h={24}>
                  <ActiveBox><Lines rows={[[0, 14, 2], [0, 9, 5], [0, 14, 8], [0, 9, 11]]} /></ActiveBox>
                  <ActiveBox $on><Lines rows={[[0, 14, 2], [2, 12, 5], [0, 14, 8], [2, 12, 11]]} /></ActiveBox>
                  <ActiveBox><Lines rows={[[0, 14, 2], [5, 14, 5], [0, 14, 8], [5, 14, 11]]} /></ActiveBox>
                  <Slot $w={24}><MergeIcon /></Slot>
                  <Slot $w={10}><Chevron /></Slot>
                </ToolRow>
                <ToolRow $h={21}>
                  <Slot $w={22}><IndentIcon /></Slot>
                  <Slot $w={26}><IndentIcon flip /></Slot>
                  <Slot $w={4}><Divider /></Slot>
                  <Slot $w={6} />
                  <Slot $w={18}><AngleIcon /></Slot>
                  <Slot $w={10}><Chevron /></Slot>
                  <Slot $w={8} />
                  <Slot $w={2}><Divider /></Slot>
                  <Slot $w={6} />
                  <Slot $w={23}><Glyph $size={13}><PilcrowArrow>›</PilcrowArrow>¶</Glyph></Slot>
                  <Slot $w={6}><Chevron /></Slot>
                </ToolRow>
              </GroupBody>
              <GroupLabel>Выравнивание</GroupLabel>
              <LauncherIcon />
            </Group>

            <Group $w={101}>
              <GroupBody $pad={8}>
                <ToolRow $h={23}>
                  <Select $w={85}><span>Общий</span><Chevron color="#333" /></Select>
                </ToolRow>
                <ToolRow $h={23}>
                  <Slot $w={22}><AccountIcon /></Slot>
                  <Slot $w={10}><Chevron /></Slot>
                  <Slot $w={34}><Glyph $size={21} $color="#555">%</Glyph></Slot>
                  <Slot $w={18}><Glyph $size={10} $color="#777">000</Glyph></Slot>
                </ToolRow>
                <ToolRow $h={26}>
                  <Slot $w={20}><DecimalIcon more /></Slot>
                  <Slot $w={6} />
                  <Slot $w={20}><DecimalIcon /></Slot>
                </ToolRow>
              </GroupBody>
              <GroupLabel>Число</GroupLabel>
              <LauncherIcon />
            </Group>

            <Group $w={212}>
              <GroupBody>
                <StyleList>
                  <StyleRow><CondFormatIcon />Условное форматирование <Chevron /></StyleRow>
                  <StyleRow><TableStyleIcon />Форматировать как таблицу <Chevron /></StyleRow>
                  <StyleRow><TableStyleIcon filled />Стили ячеек <Chevron /></StyleRow>
                </StyleList>
              </GroupBody>
              <GroupLabel $pr={0}>Стили</GroupLabel>
            </Group>

            <Group $w={57}>
              <GroupBody>
                <BigTool>
                  <BigButton><CellsIcon /></BigButton>
                  <BigLabel>Ячейки</BigLabel>
                  <Chevron />
                </BigTool>
              </GroupBody>
            </Group>

            <Group $w={106}>
              <GroupBody>
                <BigTool>
                  <BigButton><SearchIcon color="#555" size={16} /></BigButton>
                  <BigLabel>Редактирование</BigLabel>
                  <Chevron />
                </BigTool>
              </GroupBody>
            </Group>

            <CollapseIcon width="11" height="7" viewBox="0 0 11 7">
              <path d="M1 6l4.500-4.500L10 6" fill="none" stroke="#555" strokeWidth="1.200" />
            </CollapseIcon>
          </Ribbon>

          <FormulaBar>
            <NameBox><span>B2</span><Tri /></NameBox>
            <GripDots>
              <svg width="3" height="11" viewBox="0 0 3 11" fill="#aaa">
                <path d="M0 0h2v2H0zM0 4.500h2v2H0zM0 9h2v2H0z" />
              </svg>
            </GripDots>
            <FormulaButtons>
              <Slot $w={36}>
                <svg width="11" height="11" viewBox="0 0 11 11"><path d="M1 1l9 9M10 1l-9 9" stroke="#c4c4c4" strokeWidth="1.500" /></svg>
              </Slot>
              <Slot $w={36}>
                <svg width="13" height="11" viewBox="0 0 13 11"><path d="M1 6l4 4 7-9" fill="none" stroke="#c4c4c4" strokeWidth="2" /></svg>
              </Slot>
              <Slot $w={36}><FxGlyph>fx</FxGlyph></Slot>
            </FormulaButtons>
            <FormulaCell>
              <span>Продажи</span>
              <svg width="11" height="8" viewBox="0 0 11 8"><path d="M1 1l4.500 4.500L10 1" fill="none" stroke="#888" strokeWidth="2" /></svg>
            </FormulaCell>
          </FormulaBar>

          <SheetArea>
            <Sheet>
              <SheetRow $h={20}>
                <Corner>
                  <svg width="13" height="13" viewBox="0 0 13 13"><path d="M13 0v13H0z" fill="#b4b4b4" /></svg>
                </Corner>
                {letters.map((l) => (
                  <ColHead key={l} $on={l === 'B'}>{l}</ColHead>
                ))}
              </SheetRow>
              <SheetRow $h={21}>
                <RowHead>1</RowHead>
                {headers.map((h) => (
                  <HeaderCell key={h}>{h}</HeaderCell>
                ))}
                <EmptyCell />
                <EmptyCell />
              </SheetRow>
              {rows.map((row, i) => (
                <DataRow key={i} row={row} index={i} />
              ))}
              {emptyRows.map((n) => (
                <SheetRow key={n} $h={20}>
                  <RowHead>{n}</RowHead>
                  {letters.map((l) => (
                    <EmptyCell key={l} />
                  ))}
                </SheetRow>
              ))}
              <GridEdge />
              <GridBottomEdge />
              <Selection><FillHandle /></Selection>
              <PasteOptions><PasteOptionsIcon /></PasteOptions>
            </Sheet>
            <VScroll>
              <ScrollButton><Tri dir="up" /></ScrollButton>
              <VThumb />
              <ScrollButton><Tri /></ScrollButton>
            </VScroll>
          </SheetArea>

          <SheetTabs>
            <NavArrows>
              <Tri dir="left" color="#bdbdbd" />
              <Tri dir="right" color="#bdbdbd" />
            </NavArrows>
            <SheetTab>Лист1</SheetTab>
            <SheetTab>Лист3</SheetTab>
            <ActiveSheetTab>Лист2</ActiveSheetTab>
            <SheetTab>Лист7</SheetTab>
            <AddSheet>
              <svg width="17" height="17" viewBox="0 0 17 17" fill="none" stroke="#bdbdbd" strokeWidth="1.400">
                <circle cx="8.500" cy="8.500" r="7.500" />
                <path d="M4.500 8.500h8M8.500 4.500v8" />
              </svg>
            </AddSheet>
            <SplitDots>
              <svg width="3" height="12" viewBox="0 0 3 12" fill="#aaa">
                <path d="M0 0h2v2H0zM0 5h2v2H0zM0 10h2v2H0z" />
              </svg>
            </SplitDots>
            <HScroll>
              <ScrollButton $w={15}><Tri dir="left" color="#666" /></ScrollButton>
              <HThumb />
              <HTrack />
              <ScrollButton $w={15}><Tri dir="right" color="#666" /></ScrollButton>
            </HScroll>
          </SheetTabs>

          <StatusBar>
            <StatusLeft>Готово</StatusLeft>
            <CameraViewIcon />
            <StatusCount>Количество: 10</StatusCount>
            <ViewButton $on><GridViewIcon /></ViewButton>
            <ViewButton><PageViewIcon /></ViewButton>
            <ViewButton><BreakViewIcon /></ViewButton>
            <ZoomSign $w={14}>−</ZoomSign>
            <ZoomSlider><ZoomThumb /></ZoomSlider>
            <ZoomSign $w={12}>+</ZoomSign>
            <ZoomText>100 %</ZoomText>
          </StatusBar>
        </Excel>
        <Highlight />
      </WindowFrame>
    </Page>
  );
}
